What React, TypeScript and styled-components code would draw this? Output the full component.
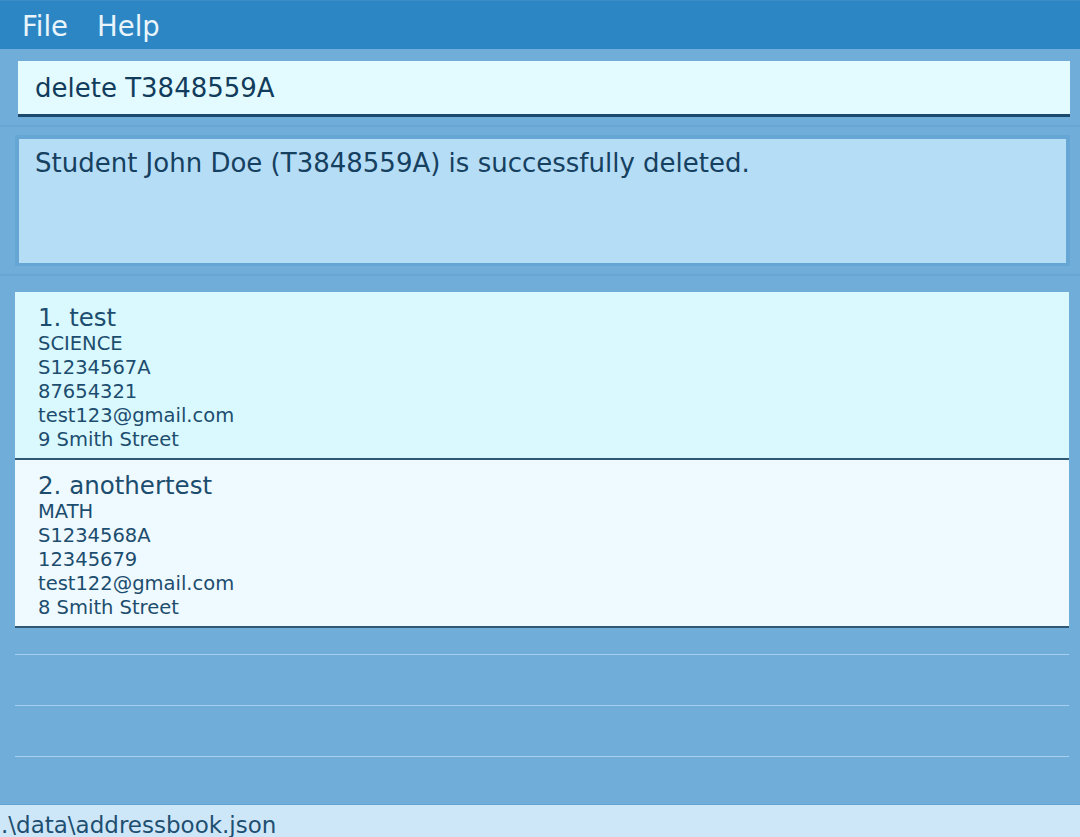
import styled, { createGlobalStyle } from "styled-components";

const GlobalStyle = createGlobalStyle`
    html, body {
        margin: 0;
        padding: 0;
        background-color: #70aed9;
        font-family: "DejaVu Sans", Verdana, sans-serif;
    }
`;

const students = [
    {
        name: "test",
        subject: "SCIENCE",
        id: "S1234567A",
        phone: "87654321",
        email: "test123@gmail.com",
        address: "9 Smith Street",
    },
    {
        name: "anothertest",
        subject: "MATH",
        id: "S1234568A",
        phone: "12345679",
        email: "test122@gmail.com",
        address: "8 Smith Street",
    },
];

export default function App() {
    return (
        <Container>
            <GlobalStyle />
            <MenuBar>
                <MenuItem>File</MenuItem>
                <MenuItem>Help</MenuItem>
            </MenuBar>
            <CommandPane>
                <CommandBox>delete T3848559A</CommandBox>
            </CommandPane>
            <ResultPane>
                <ResultBox>Student John Doe (T3848559A) is successfully deleted.</ResultBox>
            </ResultPane>
            <ListPane>
                {students.map((student, index) => {
                    return (
                        <Card key={index} odd={index % 2 === 1}>
                            <Title>{index + 1}. {student.name}</Title>
                            <Detail>{student.subject}</Detail>
                            <Detail>{student.id}</Detail>
                            <Detail>{student.phone}</Detail>
                            <Detail>{student.email}</Detail>
                            <Detail>{student.address}</Detail>
                        </Card>
                    )
                })}
                <EmptyRow size={27} />
                <EmptyRow size={51} />
                <EmptyRow size={51} />
            </ListPane>
            <StatusBar>.\data\addressbook.json</StatusBar>
        </Container>
    )
}

const Container = styled.div`
    display: flex;
    flex-direction: column;
    height: 837px;
    overflow: hidden;
    background-color: #70aed9;
`;

const MenuBar = styled.div`
    display: flex;
    align-items: center;
    gap: 29px;
    height: 49px;
    padding-left: 22px;
    background-color: #2c86c3;
    border-top: 1px solid #3a8fc8;
    box-sizing: border-box;
`;

const MenuItem = styled.span`
    color: #e9f4fb;
    font-size: 27.5px;
    padding-top: 2px;
`;

const CommandPane = styled.div`
    padding: 12px 10px 8px 18px;
    border-bottom: 2px solid #68a7d3;
`;

const CommandBox = styled.div`
    height: 53px;
    display: flex;
    align-items: center;
    padding-left: 17px;
    background-color: #e3fbff;
    border-bottom: 3px solid #1b4a6e;
    color: #123c5c;
    font-size: 26px;
`;

const ResultPane = styled.div`
    padding: 8px 10px 8px 15px;
    border-bottom: 2px solid #68a7d3;
`;

const ResultBox = styled.div`
    padding: 9px 16px 5px;
    box-sizing: border-box;
    height: 131px;
    background-color: #b5ddf6;
    border: 4px solid #66a6d4;
    border-bottom-width: 3px;
    color: #16405f;
    font-size: 26px;
`;

const ListPane = styled.div`
    flex: 1;
    display: flex;
    flex-direction: column;
    padding: 16px 11px 0 15px;
`;

const Card = styled.div<{ odd: boolean }>`
    display: flex;
    flex-direction: column;
    padding: 12px 23px 6px;
    background-color: ${(props) => (props.odd ? "#eefaff" : "#d9f9ff")};
    border-bottom: 2px solid #2e5873;
    color: #1d4d6e;
`;

const Title = styled.div`
    font-size: 24.5px;
    line-height: 28px;
`;

const Detail = styled.div`
    font-size: 19.5px;
    line-height: 24px;
`;

const EmptyRow = styled.div<{ size: number }>`
    height: ${(props) => props.size}px;
    border-bottom: 1px solid #a6d0ee;
    box-sizing: border-box;
`;

const StatusBar = styled.div`
    height: 32px;
    padding-left: 1px;
    background-color: #cde7f9;
    border-top: 1px solid #64a5d3;
    color: #1f4f70;
    font-size: 23px;
    line-height: 40px;
    overflow: hidden;
`;
